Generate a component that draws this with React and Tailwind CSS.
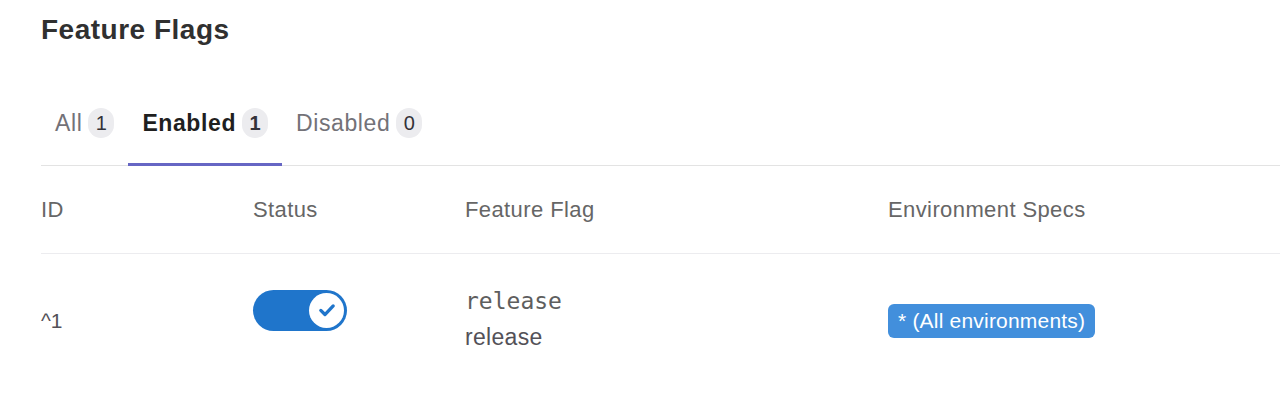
import React from 'react';

const tabs = [
    { label: 'All', count: 1, active: false },
    { label: 'Enabled', count: 1, active: true },
    { label: 'Disabled', count: 0, active: false },
]

const Toggle = () => (
    <div className='w-[94px] h-[41px] rounded-full bg-[#1f75cb] flex items-center justify-end pr-[3px]'>
        <div className='w-[35px] h-[35px] rounded-full bg-white flex items-center justify-center'>
            <svg width="22" height="22" viewBox="0 0 16 16" fill="none">
                <path d="M3.5 8.3l3 3 6-6.3" stroke="#1f75cb" strokeWidth="2.4" strokeLinecap="round" strokeLinejoin="round" />
            </svg>
        </div>
    </div>
)

const App = () => {
    return (
        <div className='w-[1280px] h-[411px] bg-white overflow-hidden pl-[41px] font-["Liberation_Sans",Arial,sans-serif]'>
            <h1 className='text-[28px] font-bold tracking-[0.5px] text-[#303030] leading-none pt-[16px] h-[82px]'>Feature Flags</h1>

            <div className='flex border-b border-[#e3e3e3] w-[1300px]'>
                {tabs.map((t) => (
                    <div
                        key={t.label}
                        className={'flex items-center gap-[6px] px-[14px] h-[84px] pt-[1px] border-b-[3px] -mb-px ' + (t.active ? 'border-[#6666c4] text-[#1f1f1f] font-bold' : 'border-transparent text-[#737278]')}
                    >
                        <span className='text-[23px] tracking-[0.6px]'>{t.label}</span>
                        <span className='min-w-[26px] h-[30px] px-[7px] rounded-full bg-[#ececef] text-[#333238] text-[20px] flex items-center justify-center'>{t.count}</span>
                    </div>
                ))}
            </div>

            <div className='grid grid-cols-[212px_212px_423px_1fr] h-[88px] items-center border-b border-[#ececef] text-[22px] tracking-[0.4px] text-[#666] w-[1300px]'>
                <div>ID</div>
                <div>Status</div>
                <div>Feature Flag</div>
                <div>Environment Specs</div>
            </div>

            <div className='grid grid-cols-[212px_212px_423px_1fr] items-center h-[134px] text-[#535158]'>
                <div className='text-[21px]'>^1</div>
                <div className='mb-[22px]'><Toggle /></div>
                <div className='flex flex-col gap-[6px] -mt-[4px]'>
                    <span className='font-["DejaVu_Sans_Mono",monospace] text-[23px] text-[#5e5e5e] leading-[30px]'>release</span>
                    <span className='text-[23px] tracking-[0.3px] text-[#535158] leading-[30px]'>release</span>
                </div>
                <div>
                    <span className='inline-flex items-center h-[34px] px-[10px] rounded-[6px] bg-[#428fdc] text-white text-[21px] tracking-[0.2px]'>* (All environments)</span>
                </div>
            </div>
        </div>
    );
};

export default App;
